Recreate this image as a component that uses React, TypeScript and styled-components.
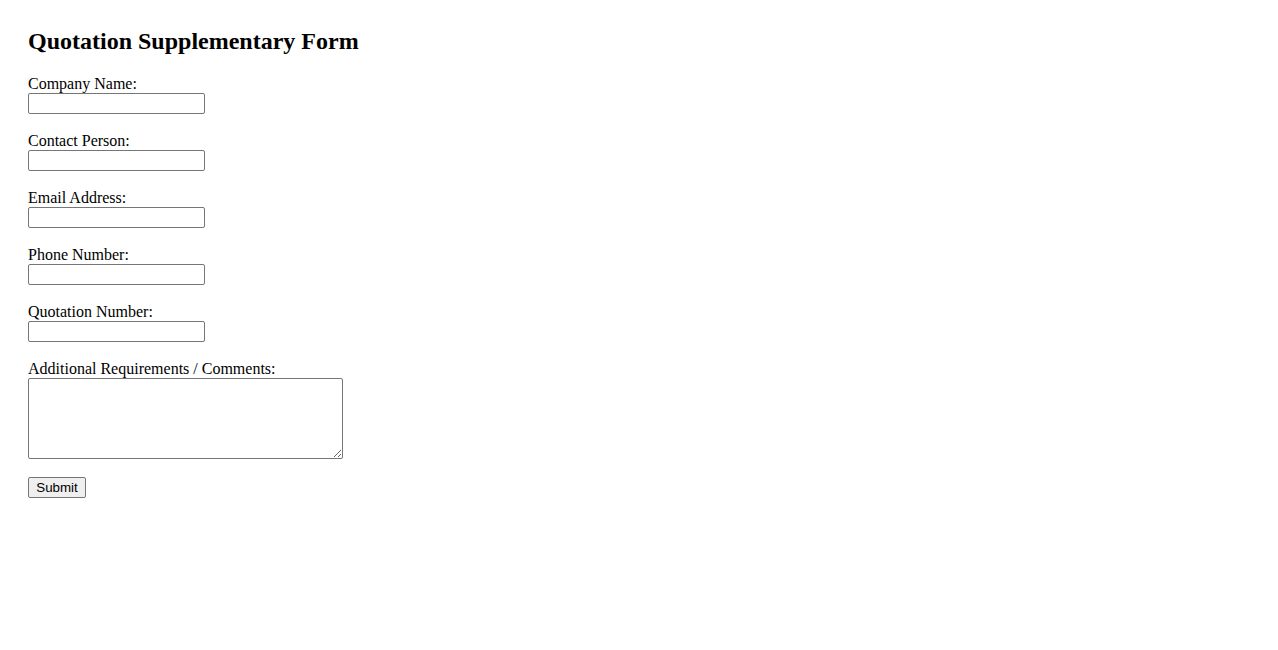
import styled, { createGlobalStyle } from "styled-components";

const GlobalStyle = createGlobalStyle`
  body {
    margin: 8px;
    background: #ffffff;
    color: #000000;
    font-family: "Liberation Serif", "Times New Roman", serif;
    font-size: 16px;
  }
`;

const fields = [
  { id: "company", label: "Company Name:" },
  { id: "contact", label: "Contact Person:" },
  { id: "email", label: "Email Address:" },
  { id: "phone", label: "Phone Number:" },
  { id: "quotation", label: "Quotation Number:" },
];

const App = () => {
  return (
    <>
      <GlobalStyle />
      <Page>
        <Title>Quotation Supplementary Form</Title>
        <Form onSubmit={(e) => e.preventDefault()}>
          {fields.map((f) => (
            <Group key={f.id}>
              <Label htmlFor={f.id}>{f.label}</Label>
              <Input id={f.id} type="text" />
            </Group>
          ))}
          <Group>
            <Label htmlFor="comments">Additional Requirements / Comments:</Label>
            <TextArea id="comments" />
          </Group>
          <SubmitButton type="submit">Submit</SubmitButton>
        </Form>
      </Page>
    </>
  );
};

const Page = styled.div`
  padding: 20px;
`;

const Title = styled.h2`
  margin: 0 0 20px;
  font-size: 24px;
  font-weight: 700;
  line-height: 27px;
`;

const Form = styled.form`
  display: flex;
  flex-direction: column;
  align-items: flex-start;
`;

const Group = styled.div`
  display: flex;
  flex-direction: column;
  align-items: flex-start;
  margin-bottom: 18px;
`;

const Label = styled.label`
  font-size: 16px;
  line-height: 18px;
`;

const Input = styled.input`
  box-sizing: border-box;
  width: 177px;
  height: 21px;
  margin: 0;
  padding: 1px 2px;
  border: 1px solid #767676;
  border-radius: 2px;
  font-family: "Liberation Sans", Arial, sans-serif;
  font-size: 13.33px;
  background: #ffffff;
`;

const TextArea = styled.textarea`
  box-sizing: border-box;
  width: 315px;
  height: 81px;
  margin: 0;
  padding: 2px;
  border: 1px solid #767676;
  border-radius: 2px;
  font-family: "Liberation Mono", monospace;
  font-size: 13.33px;
  background: #ffffff;
`;

const SubmitButton = styled.button`
  box-sizing: border-box;
  width: 58px;
  height: 21px;
  margin: 0;
  padding: 1px 6px;
  border: 1px solid #767676;
  border-radius: 2px;
  background: #efefef;
  color: #000000;
  font-family: "Liberation Sans", Arial, sans-serif;
  font-size: 13.33px;
  line-height: 17px;
`;

export default App;
